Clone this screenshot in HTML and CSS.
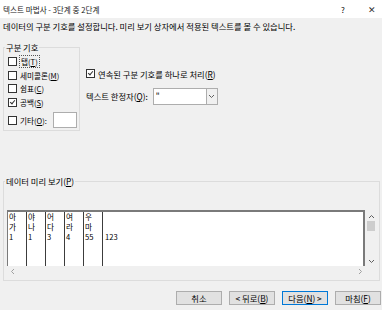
FILE: index.html
```html
<!DOCTYPE html>
<html>
<head>
    <link rel="stylesheet" href="styles.css">
</head>
<body>
    <div class="window">
        <div class="titlebar">
            <span class="title">텍스트 마법사 - 3단계 중 2단계</span>
            <span class="help">?</span>
            <span class="close">✕</span>
        </div>

        <div class="dialog">
            <div class="desc">데이터의 구분 기호를 설정합니다. 미리 보기 상자에서 적용된 텍스트를 볼 수 있습니다.</div>

            <div class="top-row">
                <!-- delimiter group -->
                <fieldset class="group delim">
                    <legend>구분 기호</legend>
                    <div class="check"><span class="box"></span><span class="focus">탭(<u>T</u>)</span></div>
                    <div class="check"><span class="box"></span>세미콜론(<u>M</u>)</div>
                    <div class="check"><span class="box"></span>쉼표(<u>C</u>)</div>
                    <div class="check"><span class="box checked"></span>공백(<u>S</u>)</div>
                    <div class="check other"><span class="box"></span>기타(<u>O</u>):<span class="other-input"></span></div>
                </fieldset>

                <div class="options">
                    <div class="check"><span class="box checked"></span>연속된 구분 기호를 하나로 처리(<u>R</u>)</div>
                    <div class="qualifier">
                        <span>텍스트 한정자(<u>Q</u>):</span>
                        <div class="combo">
                            <span class="combo-value">"</span>
                            <span class="combo-drop">
                                <svg width="7" height="5" viewBox="0 0 7 5"><path d="M1 1 L3.5 3.5 L6 1" fill="none" stroke="#606060" stroke-width="1"/></svg>
                            </span>
                        </div>
                    </div>
                </div>
            </div>

            <fieldset class="group preview">
                <legend>데이터 미리 보기(<u>P</u>)</legend>
                <div class="preview-frame">
                    <div class="preview-main">
                        <div class="sheet">
                            <div class="col"><span>아</span><span>가</span><span>1</span></div>
                            <div class="col"><span>야</span><span>나</span><span>1</span></div>
                            <div class="col"><span>어</span><span>다</span><span>3</span></div>
                            <div class="col"><span>여</span><span>라</span><span>4</span></div>
                            <div class="col"><span>우</span><span>마</span><span>55</span></div>
                            <div class="col last"><span>&nbsp;</span><span>&nbsp;</span><span>123</span></div>
                        </div>
                        <div class="vscroll">
                            <svg width="7" height="5" viewBox="0 0 7 5"><path d="M1 4 L3.5 1.5 L6 4" fill="none" stroke="#606060" stroke-width="1"/></svg>
                            <div class="thumb"></div>
                            <svg class="down" width="7" height="5" viewBox="0 0 7 5"><path d="M1 1 L3.5 3.5 L6 1" fill="none" stroke="#606060" stroke-width="1"/></svg>
                        </div>
                    </div>
                    <div class="hscroll">
                        <svg width="5" height="7" viewBox="0 0 5 7"><path d="M4 1 L1.5 3.5 L4 6" fill="none" stroke="#a0a0a0" stroke-width="1"/></svg>
                        <svg width="5" height="7" viewBox="0 0 5 7"><path d="M1 1 L3.5 3.5 L1 6" fill="none" stroke="#a0a0a0" stroke-width="1"/></svg>
                    </div>
                </div>
            </fieldset>

            <div class="buttons">
                <div class="btn">취소</div>
                <div class="btn">&lt; 뒤로(<u>B</u>)</div>
                <div class="btn default">다음(<u>N</u>) &gt;</div>
                <div class="btn">마침(<u>F</u>)</div>
            </div>
        </div>
    </div>
</body>
</html>
```

FILE: styles.css
```css
body {
    margin: 0;
    background: #f0f0f0;
    font-family: "Noto Sans CJK KR", "Noto Sans", sans-serif;
    font-size: 8.3px;
    color: #000;
}

.window {
    width: 382px;
    height: 310px;
    display: flex;
    flex-direction: column;
}

.titlebar {
    height: 18px;
    background: #fff;
    display: flex;
    align-items: center;
    padding-left: 3px;
}

.title {
    flex: 1;
    color: #222;
    font-size: 7.6px;
}

.help {
    width: 10px;
    text-align: center;
    margin-right: 14px;
    font-size: 8px;
}

.close {
    width: 20px;
    text-align: center;
    font-size: 9px;
    color: #333;
}

.dialog {
    flex: 1;
    padding: 0 1px 0 3px;
    display: flex;
    flex-direction: column;
}

.desc {
    height: 24px;
    line-height: 17px;
}

.top-row {
    display: flex;
}

/* group boxes */
.group {
    margin: 0;
    border: 1px solid #dcdcdc;
    padding: 0;
    min-width: 0;
}

.group legend {
    padding: 0 1px;
    line-height: 10px;
}

.delim {
    width: 77px;
    height: 89px;
    padding: 3px 0 0 4px;
    box-sizing: border-box;
    font-size: 7.6px;
}

.delim legend {
    margin-left: -3px;
    font-size: 8.3px;
}

.check {
    display: flex;
    align-items: center;
    height: 13.5px;
}

.box {
    width: 7px;
    height: 7px;
    border: 1px solid #333;
    background: #fff;
    margin-right: 3px;
    box-sizing: content-box;
    position: relative;
}

.box.checked::after {
    content: "";
    position: absolute;
    left: 1.5px;
    top: 0;
    width: 2px;
    height: 4px;
    border: solid #333;
    border-width: 0 1px 1px 0;
    transform: rotate(40deg);
}

.focus {
    border: 1px dotted #555;
    padding: 0 1px;
    margin-left: -1px;
}

.check.other {
    height: 18px;
    margin-top: 2px;
}

.other-input {
    width: 22px;
    height: 14px;
    background: #fff;
    border: 1px solid #adadad;
    margin-left: 6px;
}

.options {
    padding: 25px 0 0 6px;
}

.qualifier {
    display: flex;
    align-items: center;
    margin-top: 7px;
}

.combo {
    margin-left: 5px;
    width: 63px;
    height: 15px;
    border: 1px solid #adadad;
    background: #fff;
    display: flex;
}

.combo-value {
    flex: 1;
    padding-left: 2px;
    line-height: 12px;
}

.combo-drop {
    width: 10px;
    border-left: 1px solid #adadad;
    background: #f0f0f0;
    display: flex;
    align-items: center;
    justify-content: center;
}

/* preview */
.preview {
    margin-top: 45px;
    height: 105px;
    width: 377px;
    box-sizing: border-box;
    padding: 24px 1px 0 3px;
}

.preview legend {
    margin-left: -2px;
}

.preview-frame {
    width: 370px;
}

.preview-main {
    display: flex;
    height: 56px;
}

.sheet {
    flex: 1;
    display: flex;
    background: #fff;
    border-top: 2px solid #7a7a7a;
    border-left: 1px solid #7a7a7a;
    border-right: 2px solid #7a7a7a;
}

.col {
    width: 17px;
    border-right: 1px solid #3c3c3c;
    display: flex;
    flex-direction: column;
    padding-left: 1px;
    font-size: 7.6px;
    line-height: 10px;
}

.col.last {
    border-right: none;
    width: auto;
    padding-left: 2px;
}

.vscroll {
    width: 12px;
    display: flex;
    flex-direction: column;
    align-items: center;
    padding-top: 4px;
}

.thumb {
    width: 8px;
    height: 10px;
    background: #cdcdcd;
    margin-top: 2px;
}

.vscroll .down {
    margin-top: auto;
    margin-bottom: 2px;
}

.hscroll {
    height: 11px;
    display: flex;
    align-items: center;
    justify-content: space-between;
    padding: 0 14px 0 3px;
}

/* buttons */
.buttons {
    display: flex;
    justify-content: flex-end;
    gap: 7px;
    margin-top: 10px;
}

.btn {
    width: 44px;
    height: 12px;
    border: 1px solid #adadad;
    background: #e1e1e1;
    text-align: center;
    line-height: 12px;
}

.btn.default {
    border-color: #0078d7;
}
```
